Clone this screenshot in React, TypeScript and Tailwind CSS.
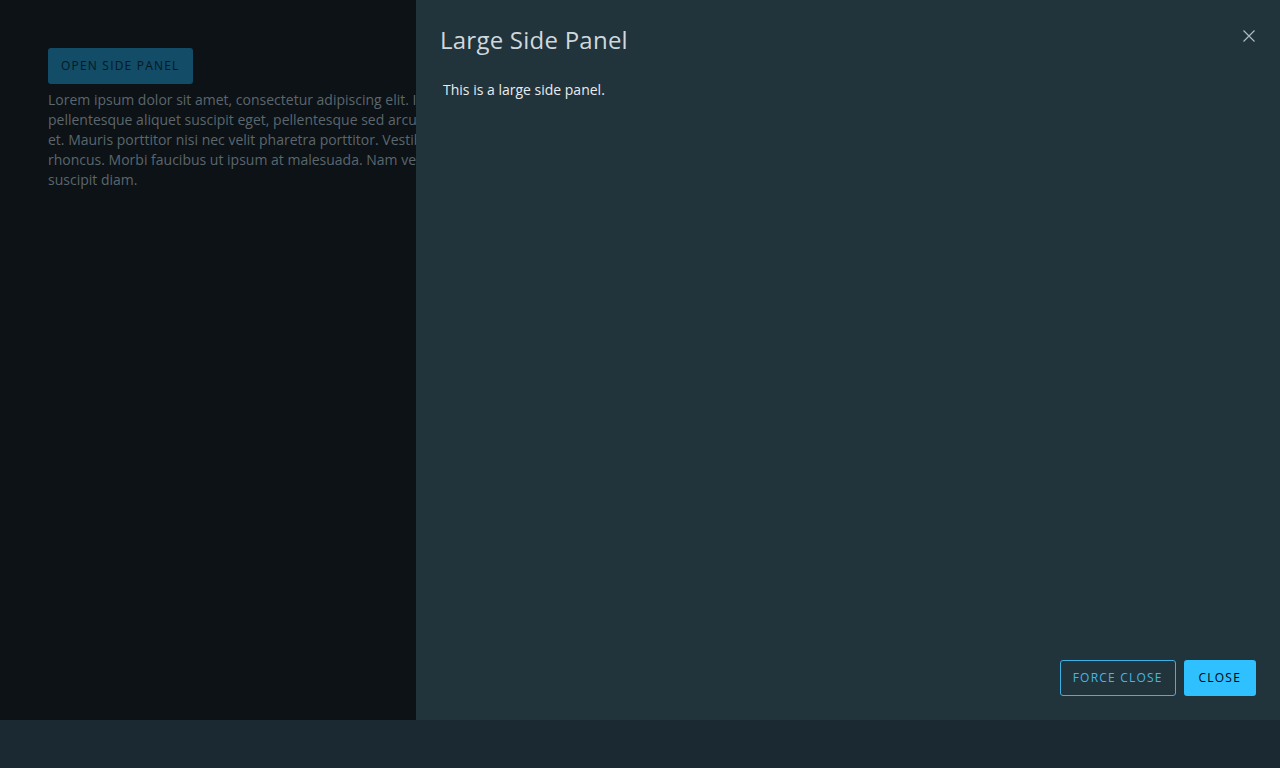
import React from "react";

const font = { fontFamily: "'Open Sans', 'Noto Sans', sans-serif" };

export default function App() {
  return (
    <div className="w-[1280px] h-[768px] bg-[#1b2a32] overflow-hidden" style={font}>
      <div className="h-[720px] bg-[#0c1216] flex">
        <div className="w-[416px] shrink-0 overflow-hidden px-12 pt-12">
          <button className="h-9 px-[13px] rounded-[3px] bg-[#124c67] text-[#061820] text-[12px] tracking-[0.1em] font-medium">
            OPEN SIDE PANEL
          </button>
          <p className="mt-[6px] text-[14px] leading-[20px] text-[#5b666d] whitespace-nowrap">
            Lorem ipsum dolor sit amet, consectetur adipiscing elit. In ac nibh in enim tempus
            <br />
            pellentesque aliquet suscipit eget, pellentesque sed arcu. Quisque dapibus ultricies
            <br />
            et. Mauris porttitor nisi nec velit pharetra porttitor. Vestibulum vulputate sollicitudin
            <br />
            rhoncus. Morbi faucibus ut ipsum at malesuada. Nam vestibulum felis sit amet metus
            <br />
            suscipit diam.
          </p>
        </div>
        <div className="flex-1 bg-[#21333b] flex flex-col">
          <div className="flex items-start justify-between pl-6 pr-6 pt-[22px]">
            <h2 className="text-[24px] leading-[36px] text-[#cfd8dc] font-normal tracking-[0.01em]">Large Side Panel</h2>
            <button className="mt-[8px] mr-[1px] text-[#adbbc4]">
              <svg width="12" height="12" viewBox="0 0 12 12" fill="none" stroke="currentColor" strokeWidth="1.2">
                <path d="M0.5 0.5 L11.5 11.5 M11.5 0.5 L0.5 11.5" />
              </svg>
            </button>
          </div>
          <div className="flex-1 pl-[27px] pt-[22px] text-[14px] leading-[20px] text-[#e9ecef]">
            This is a large side panel.
          </div>
          <div className="flex justify-end gap-2 px-6 pb-6">
            <button className="h-9 px-3 rounded-[3px] border border-[#3fb0e3] text-[#45b6e8] text-[12px] tracking-[0.1em] font-medium">
              FORCE CLOSE
            </button>
            <button className="h-9 px-[15px] rounded-[3px] bg-[#2ec0ff] text-[#000] text-[12px] tracking-[0.1em] font-medium">
              CLOSE
            </button>
          </div>
        </div>
      </div>
    </div>
  );
}
